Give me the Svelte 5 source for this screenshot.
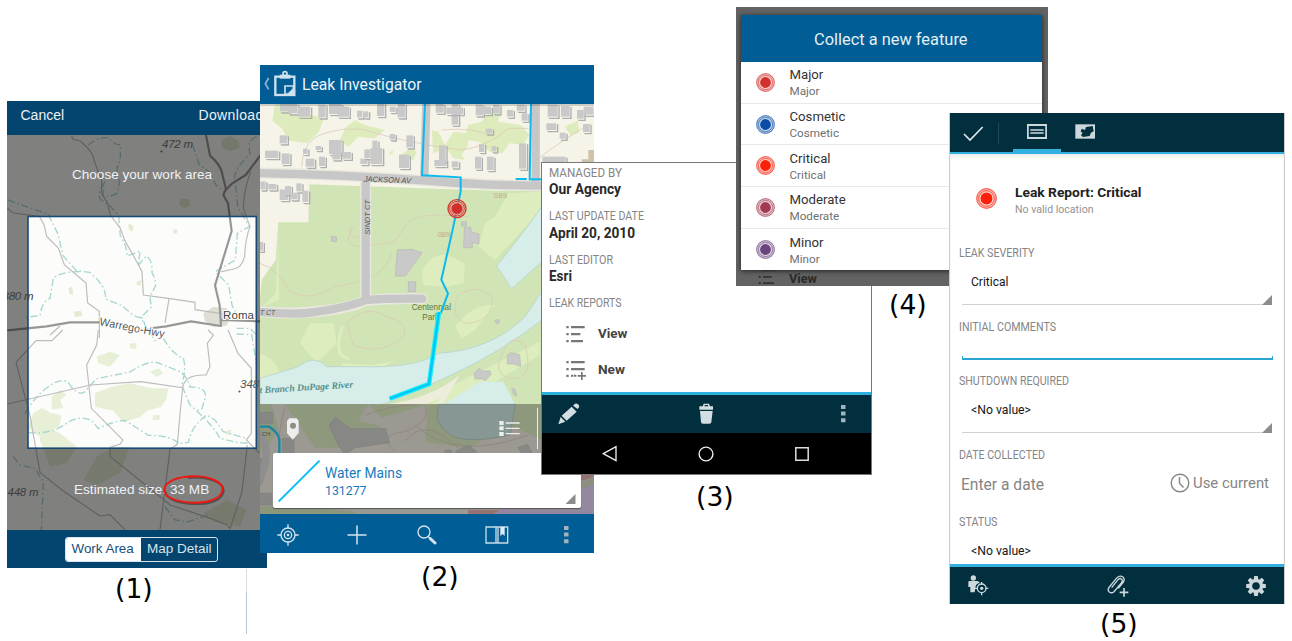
<script>
  const features = [
    { name: 'Major', color: '#d0312d' },
    { name: 'Cosmetic', color: '#0a4da8' },
    { name: 'Critical', color: '#fb2009' },
    { name: 'Moderate', color: '#a33a52' },
    { name: 'Minor', color: '#69447f' }
  ];
  const attributes = [
    ['MANAGED BY', 'Our Agency', 73, 72],
    ['LAST UPDATE DATE', 'April 20, 2010', 95, 86],
    ['LAST EDITOR', 'Esri', 64, 23]
  ];
  // Building footprints: x, y, width, height
  const houses = [
    [75,132,28,22],[100,132,28,28],[130,140,36,30],[190,134,22,38],[222,132,38,30],[248,140,34,30],[306,152,16,20],[324,154,16,18],
    [366,130,22,38],[404,140,18,16],[428,132,22,40],[542,132,24,26],[590,132,20,62],[574,142,50,20],[662,134,22,32],[684,140,24,22],
    [714,134,20,26],[756,150,18,20],[800,160,18,22],[785,134,24,18],[878,134,30,36],[918,138,26,32],[966,150,20,26],[986,140,28,24],
    [874,190,30,20],[984,192,20,24],[914,218,18,18],[74,226,22,24],[30,272,40,22],[80,280,24,32],[144,266,14,16],[152,296,26,24],
    [192,290,18,28],[222,240,38,42],[232,276,24,22],[262,276,26,20],[182,258,16,12],[316,296,22,16],[328,268,18,26],[352,242,16,30],
    [346,264,36,48],[404,222,16,16],[454,226,20,36],[432,284,30,40],[552,256,20,50],[538,300,36,18],[590,304,20,18],[672,252,16,24],
    [660,290,18,36],[696,290,20,40],[710,258,14,16],[792,250,22,76],[692,206,20,14],[862,290,70,16],[16,364,16,24],[40,372,24,16],
    [74,388,26,32],[90,378,18,24],[106,398,22,20],[124,370,16,24],[142,392,18,34],[10,546,14,26]
  ];
</script>

{#snippet rings(color, size)}
  <svg class="rings" width={size} height={size} viewBox="0 0 20 20">
    <circle cx="10" cy="10" r="9.9" fill={color} opacity=".32" />
    <circle cx="10" cy="10" r="9.3" fill="none" stroke={color} stroke-width=".9" opacity=".7" />
    <circle cx="10" cy="10" r="7.5" fill="none" stroke={color} stroke-width=".8" opacity=".7" />
    <circle cx="10" cy="10" r="6.3" fill="#fff" opacity=".65" />
    <circle cx="10" cy="10" r="5.7" fill={color} />
  </svg>
{/snippet}

{#snippet fit(text, width, size, weight = 400)}
  <svg class="fit" width={width + 2} height="20"><text x="0" y="14" textLength={width} lengthAdjust="spacingAndGlyphs" font-size={size} font-weight={weight}>{text}</text></svg>
{/snippet}

{#snippet dots()}
  <svg width="5" height="18" viewBox="0 0 5 18" fill="#9fb4be"><path d="M0 0h4.500v4H0zM0 6.600h4.500v4H0zM0 13.200h4.500v4H0z" /></svg>
{/snippet}

<main>
  <section class="phone area">
    <header><span>Cancel</span><span>Download</span></header>
    <div class="stack">
      <svg class="map" width="260" height="395" viewBox="7 135 260 395">
        <rect x="7" y="135" width="260" height="395" fill="#fcfcfa" />
        <g transform="translate(0 95) scale(.33333)">
          <g fill="#e2ecd0">
            <path d="M665 135l25-12 25 15 5 20-30 10-25-10zM540 312l25 0 8 18-20 10-16-10zM385 385l15 8-2 18-12-8zM520 402l12 2-2 12-10-2zM222 650l20-3 5 15-22 5zM205 580l12-5 2 25-10-2zM410 560l14-4-2 16-12-2z" />
            <path d="M610 655l30-20 40 5 12 22-12 30-38 5-28-20z" fill="#deded4" />
          </g>
          <g fill="none" stroke="#a8d6d1" stroke-width="4" stroke-dasharray="22 8 5 8">
            <path d="M265 150q30-25 60-22q20 25 35 20q5 60-10 70l8 45-5 30q-20 15-45 10l5-40q-22 30-12 50l30 20 25 30 5 60q20 30 20 60l40-15-8 45 25-30q20 10 18 50q16 30 8 45l-14 28 4 30-30 30q15 20 8 40l20 10 15 25" />
            <path d="M24 315l60 22 60 20 30 60 15 65 40 45 40 5q50 40 48 80l50 20q40 40 55 35l20 35 40-5" />
            <path d="M240 530q-60 0-80 20l-10 60q-25 10-30 52l-45 5" />
            <path d="M578 150l20 60 30 20 20 40 20 15M770 125q-30 10-20 50l-35 40q-20 40-8 60l6 60 35 60-36 20-6 80-60 35 40 40 10 60 10 20M710 700l40 0 20 20" />
          </g>
          <g fill="none" stroke="#bebcbc" stroke-width="3.500">
            <path d="M215 123l4 10 22 5q40 35 40 55q10 30 24 60l0 42 18 30 8 35 30 40 15 40q35 60 50 90l4 70 75 10 80 12 0 22 80 12" />
            <path d="M22 340l18 14 78 10 14 25 8 35 35 35 18 50 65 55 5 60 35 25 0 80" />
            <path d="M507 612l-12 72M752 230q-22 60-22 110l20 55q-15 40-16 90-10 35-32 37l-38 8M180 693l-30 27" />
          </g>
          <path d="M618 120l12 62q35 30 38 60l10 40-8 18 14 25 11 83-50 163 14 60 4 62-90-14-75 15-40 5M300 682l-90 0-70 12-118 12M665 675l115 4M672 290l25-25 40-25 45-60" fill="none" stroke="#979797" stroke-width="6.500" stroke-linejoin="round" />
        </g>
        <g transform="translate(0 330) scale(.33333)">
          <g fill="#e7f0d6">
            <path d="M285 190l50-20 55-10 65 15 50 0-5 30-15 25-45 12-20 20-50 15-30-35-55-12z" />
            <path d="M155 200l25-20 20 14-20 15 10 25-35 5zM100 250l25-16 30 16 30 5-8 35-40 20 25 20-40-8-40-30zM290 80l40-15 30 10-30 35-35-10zM450 125l25-10 15 14-20 12zM120 280l60 30 50 40-30 50-50 10-30-80zM390 40l20 0-2 16-18 0zM340 350l50 0-30 80-70 35-40-15 40-70zM460 255l22 0-5 15-20 0zM680 300l14 0 0 15-15 0zM610 550l70-40 60 30-20 50-80-15z" />
          </g>
          <g fill="none" stroke="#a8d6d1" stroke-width="4" stroke-dasharray="22 8 5 8">
            <path d="M75 250q30-50 60-72q60-50 80-5q30 30 45 5l30-32 100-20q60-40 90-25l50 20q30 10 40 50q50 0 46 30l-10 35-20 8M490 25q30 50 60 60q10 30-5 80l25 60q70 60 90 100l50 12 35 3" />
            <path d="M85 308q70 5 110-25q40-30 80-12l20 25q50-25 80-25l70 45q70 0 90 25l30-4q10-50 55-82l25 15 25 35 70 20" />
            <path d="M40 380l20 25 45 10 25 40-6 145M495 530l30 40 40 5 60-20M710 12l45 2 15 90" />
          </g>
          <g fill="none" stroke="#bebcbc" stroke-width="3.500">
            <path d="M22 222l250-57 150-10 126 18-8 80-8 90-22 15-30 240M295 0l-5 45-30 60 14 130 95 95-8 12-32 10 2 28 180 145 120 40 50 20 10 12M188 0l-32 32-48 0-60 65 42 160 30 170 70 56 110 75 30-4 50 50-5 12M548 173q5-40 70-38l12-25-8-70 18-25-16-15M684 0l30 70 40 45 0 195-15 20 40 40M742 345l-16 140-36 112" />
          </g>
        </g>
        <path d="M7 135h260v395H7zM28 216.500v231.500h228v-231.500z" fill="#000" fill-opacity=".49" fill-rule="evenodd" />
        <rect x="28" y="216.500" width="228.300" height="231.700" fill="none" stroke="#164b78" stroke-width="1.600" />
        <g font-family="Liberation Sans, sans-serif" font-size="11.500" fill="#555">
          <text x="162" y="147.500" font-style="italic" fill="#3d3d3d" textLength="31">472 m</text>
          <text x="2.500" y="299.500" font-style="italic" fill="#3d3d3d" textLength="31">380 m</text>
          <text x="7.500" y="495.500" font-style="italic" fill="#3d3d3d" textLength="31">448 m</text>
          <text x="240" y="388" font-style="italic">348</text>
          <text x="223" y="318.500" fill="#3f3f3f" textLength="31" stroke="#fff" stroke-width="2" paint-order="stroke">Roma</text>
          <text transform="translate(99 325) rotate(11)" font-size="11" textLength="66" stroke="#fff" stroke-width="2" paint-order="stroke">Warrego-Hwy</text>
        </g>
        <circle cx="161.500" cy="151.500" r="1" fill="#333" /><circle cx="239.500" cy="391.500" r="1" fill="#555" />
      </svg>
      <div class="hints">
        <p>Choose your work area</p>
        <p>Estimated size: <span class="size">33 MB<svg class="ring" width="64" height="32" viewBox="162 474 64 32" fill="none">
          <path d="M188 476.500c20-2 36 5 35.500 13-.5 9-14 13.500-29 13.200-16-.3-29-5-29.300-12.700" stroke="#222" stroke-opacity=".5" stroke-width="2" transform="translate(1.200 1.400)" />
          <path d="M188 476.500c20-2 36 5 35.500 13-.5 9-14 13.500-29 13.200-16-.3-29-5-29.300-12.700C165 482 178 476 196 476.600" stroke="#ef1712" stroke-width="1.900" /></svg></span></p>
      </div>
    </div>
    <footer><div class="segments"><b>Work Area</b><span>Map Detail</span></div></footer>
  </section>
  <i class="rule"></i>

  <section class="phone viewer">
    <header>
      <svg width="35" height="27" viewBox="24 30 105 81" fill="none" stroke="#cfe1ee">
        <path d="M41 54L31 71l10 17" stroke-width="5" stroke="#8db9d5" />
        <rect x="61" y="50" width="57" height="55" stroke-width="7" /><path d="M74 44h32v12H74z" fill="#cfe1ee" stroke="none" /><circle cx="90" cy="41" r="6" stroke-width="5" />
        <path d="M90 104V78h28" stroke-width="5" /><path d="M90 104l28-27v27z" fill="#cfe1ee" stroke="none" /><path d="M97 101v-16h17z" fill="#015d95" stroke="none" />
      </svg>
      {@render fit('Leak Investigator', 119.5, 16.4)}
    </header>
    <div class="stack">
      <svg class="map" width="334" height="410" viewBox="260 104 334 410">
        <g transform="translate(255 60) scale(.33333)">
          <rect width="1035" height="1400" fill="#f6f4e8" />
          <g fill="#deecbd">
            <path d="M60 132l-8 50 30 25 20 35 55 8 35-35 15-40-40-10-60 0-30-35zM270 205l30-25 30 15 60 15-30 25-50-5-30 30-25-20zM530 210l20 5 20 40 25-40 40 5 5 35-20 30 10 15-35-5-20-30-40 15zM640 195l40-10 20-30 25-20 15 15-12 35 70 10 25 30-20 30-40-5-20 30-40-5-30-30-45-5zM400 280l15-10-3 14zM928 200l40-18 5 35-25 10zM430 290l35-25 20 10-10 25z" />
          </g>
          <path d="M163 373L720 392 860 388V1420H0V870L20 660 62 600 70 487 160 487z" fill="#d0e4b5" />
          <g fill="#ddedbd">
            <path d="M860 395L760 400 720 470 690 490 670 560 720 600 840 470 860 450zM500 640q20-60 80-55l50 25-5 60-50 10-70-5zM165 790l70 0 10 60-60 60-50-60zM15 880q50 20 60 60l-60 15zM600 800q50-70 120-65l-60 75-40 25zM15 1060q100-10 200 5l300-50 200-100 140-70 0 40-250 150-150 70-240 10zM70 520l-8 180-40 40 50-20zM260 910l90 5 60-10-20 15-130 5z" />
            <path d="M262 800q-30 90 20 96" fill="none" stroke="#ddedbd" stroke-width="9" />
          </g>
          <path d="M860 440q-40 60-135 178l45 68 90-80zM15 955l115-35q50-40 85 0l100 0q170 5 235-40q160-10 260-110l50-75V780q-80 65-200 130-200 100-300 130-150 10-345-5z" fill="#d6edea" stroke="#bdd8cc" stroke-width="3" />
          <g fill="none" stroke="#dccbb6" stroke-width="2.500">
            <path d="M140 320q5-85 70-100 60-20 120-10 130 40 290 60 80-10 140-65l60 0M560 210q100-10 150 20M15 610q60 20 85 80 60 40 140-10 150-20 170-100M300 495q-60 80 60 60l60-10 40-60q40-30 180-15M290 500q-20 40 30 30M275 790q60-60 120-20 70 20 50 60-70 60-150 25zM610 700q-30 80 30 90 80-10 70-80-40-40-90-10M755 855q20-30 55 0 30 100-40 100-70-10-15-100M830 310q120-90 180-120" />
          </g>
          <g fill="none" stroke-linejoin="round">
            <path d="M0 339q240 4 500 22 200 16 360 16M332 370v350l-30 14q-130 36-290 20M332 722q60-7 170-6" stroke="#e9e8df" stroke-width="33" stroke-linecap="round" />
            <path d="M514 130L508 350M842 130v240M0 339q240 4 500 22 200 16 360 16M332 370v350q-60 25-175 39-60 5-150-4M332 720q60-5 170-4" stroke="#c7c7c7" stroke-width="25" stroke-linecap="round" />
          </g>
          {#each houses as [x, y, bw, bh]}
            <path d="M{x + 2} {y + bh + 3}h{bw}V{y + 3}l4 0v{bh + 4}h-{bw}z" fill="#aeaeae" />
            <rect {x} {y} width={bw} height={bh} fill="#c9c9c9" />
          {/each}
          <g fill="#c9c9c9" stroke="#b6b6b4" stroke-width="2">
            <path d="M427 570l44-2 30 10-50 70-30 0zM460 665h22v30h-22zM620 485h14v13h-14zM628 502h20v14l24 6v30l-20-5v16h-26zM230 528l16 4-3 14-14-3zM757 885l12-7 25 6 3 35-20-7-20 0zM658 940l14-15 10 8 24 0 2 10-18 20-6-6-24 0zM770 985l10 3 5 20-10-5zM720 782l10-4 5 8-10 5z" />
            <path d="M1000 270h20v40h-40v-12h20z" fill="#cec3a8" stroke="none" />
          </g>
          <path d="M380 1035q140-15 235-90l-30 50-40 70-20 0 30-50q-90 40-150 40z" fill="#eeecdb" />
          <path d="M555 1040l120-75 70 0 30 60 30 80-90 50-100-40z" fill="#d6edea" />
          <g font-family="Liberation Sans, sans-serif">
            <text x="326" y="365" font-size="24" font-style="italic" fill="#555" textLength="142" lengthAdjust="spacingAndGlyphs" transform="rotate(2 326 365)">JACKSON AV</text>
            <text transform="translate(344 524) rotate(-90)" font-size="24" font-style="italic" fill="#555" textLength="104" lengthAdjust="spacingAndGlyphs">SINDT CT</text>
            <text x="15" y="764" font-size="23" font-style="italic" fill="#555" textLength="46" lengthAdjust="spacingAndGlyphs">T CT</text>
            <text x="716" y="414" font-size="23" fill="#c8a78b" textLength="40">089</text>
            <text x="548" y="531" font-size="23" fill="#c8a78b" textLength="38">089</text>
            <text x="470" y="750" font-size="26" fill="#5f7938" textLength="118" lengthAdjust="spacingAndGlyphs">Centennial</text>
            <text x="502" y="779" font-size="26" fill="#5f7938" textLength="50" lengthAdjust="spacingAndGlyphs">Park</text>
            <text transform="translate(14 1000) rotate(-3.500)" font-family="Liberation Serif, serif" font-weight="700" font-style="italic" font-size="29" fill="#59918d" textLength="281" lengthAdjust="spacingAndGlyphs">t Branch DuPage River</text>
          </g>
          <g fill="none" stroke="#0bb9f1">
            <path d="M510 132L501 346l116 6 0 42-24 115-34 150 20 42-22 60M828 132L824 358h36M782 357h33" stroke-width="6" />
            <path d="M552 756L522 972 404 1016" stroke="#18eefb" stroke-width="14" /><path d="M552 756L522 972 404 1016" stroke-width="7" stroke="#00c8f4" />
          </g>
          <g fill="none" stroke="#d23934"><circle cx="606" cy="446" r="27" stroke-width="4" /><circle cx="606" cy="446" r="22" stroke-width="3" fill="#e4aa95" fill-opacity=".7" /><circle cx="606" cy="446" r="17" fill="#d12d2b" stroke="#e78077" stroke-width="2" /></g>
        </g>
        <g transform="translate(255 395) scale(.33333)">
          <path d="M0 28H860V360H0z" fill="#dedbce" />
          <path d="M90 28l250 0-30 50 70 15-70 65-130 0zM0 28h50l20 75-40 65-30 0zM340 28h180l-140 40zM520 28h350v110L760 90 640 160l-130-20z" fill="#c7d9aa" />
          <path d="M550 28l-4 45q30 60 90 60 60 5 130-15l15-90z" fill="#bdd7d0" stroke="#a3beb5" stroke-width="3" />
          <path d="M0 340q60-20 200 0l100 10v15H0z" fill="#c5d5a8" />
          <g fill="none" stroke="#cbb8a8" stroke-width="2.500"><path d="M90 30l-20 100 50 30M420 170q-60-50 30-60 80-30 60-80M450 140q60-80 160 20M480 90q120 110 340 30M330 60q80-30 150-30" /></g>
          <g fill="#bdbdb9" stroke="#b0b0ac" stroke-width="2"><path d="M222 90l20-24 45 35 105 0 12 42-105 15-28 24-20-30zM15 52h38v34H15zM82 130h35v50H82zM0 190h30v35H0zM0 295h50v35H0zM600 170l40-20 25 20v20zM570 165l20 0 0 10-20 0zM788 158l30-10 15 30-30 0z" /></g>
          <path d="M0 110q45 30 30 100l-20 60" fill="none" stroke="#c9c9c9" stroke-width="22" />
          <text x="20" y="122" font-family="Liberation Sans, sans-serif" font-size="18" font-style="italic" fill="#555">CH</text>
          <path d="M15 95h28q30 20 30 40v40" fill="none" stroke="#0bb9f1" stroke-width="7" />
          <path d="M680 357L980 285 1020 245V357z" fill="#d3bfe3" /><path d="M640 345l95 0-20 12h-75zM970 225h50v20l-45 15z" fill="#d89a9b" /><path d="M970 265l50-23v22l-50 24z" fill="#c6c9b1" />
        </g>
        <rect x="260" y="404" width="334" height="110" fill="#383838" fill-opacity=".4" />
        <path d="M260 104h334v2H260z" opacity=".16" />
      </svg>
      <div class="mapui">
        <div class="tools">
          <svg width="12" height="22" viewBox="96 67 36 66"><path d="M103 68h22l6 8v36l-18 20-17-20V76z" fill="#eee" /><circle cx="114" cy="90" r="9" fill="#8d8f82" /></svg>
          <svg width="39" height="43" viewBox="732 36 117 129" fill="#ededeb"><path d="M733 78h13v12h-13zM733 94h13v12h-13zM733 111h13v12h-13zM752 82h42v4h-42zM752 98h42v4h-42zM752 114h42v4h-42zM846 38h3v125h-3z" /></svg>
        </div>
        <div class="card">
          <svg width="42" height="42"><path d="M.7 41.500L41.500 .7" stroke="#0bbcf8" stroke-width="1.900" /></svg>
          <div class="names">{@render fit('Water Mains', 77, 14.3)}{@render fit('131277', 41.5, 12.8)}</div>
          <i class="tri"></i>
        </div>
      </div>
    </div>
    <footer>
      <svg width="22" height="22" viewBox="65 386 66 66" fill="none" stroke="#d4e4ef" stroke-width="4"><circle cx="98" cy="419" r="21" /><circle cx="98" cy="419" r="11" /><circle cx="98" cy="419" r="4" fill="#d4e4ef" stroke="none" /><path d="M98 387v12M98 439v12M66 419h12M118 419h12" /></svg>
      <svg width="20" height="20" viewBox="0 0 20 20" stroke="#d4e4ef" stroke-width="1.500"><path d="M.5 10h19M10 .5v19" /></svg>
      <svg width="20" height="20" viewBox="486 389 60 60" fill="none" stroke="#d4e4ef"><circle cx="507" cy="410" r="18" stroke-width="4" /><path d="M519 423l7 7" stroke-width="4" /><path d="M526 430l14 13" stroke-width="9" stroke-linecap="round" /></svg>
      <svg width="24" height="18" viewBox="689 392 72 54" fill="none" stroke="#c7dbe9" stroke-width="4"><path d="M692 395h65v48h-65zM722 395v48M728 395v48" /><path d="M735 395h13v27l-6-6-7 6z" fill="#e1edf4" stroke="none" /></svg>
      {@render dots()}
    </footer>
  </section>

  <section class="phone detail">
    <div class="sheet">
      {#each attributes as [label, value, lw, vw]}
        <div class="pair"><span class="label">{@render fit(label, lw, 12.6)}</span><b>{@render fit(value, vw, 13.8, 700)}</b></div>
      {/each}
      <span class="label">{@render fit('LEAK REPORTS', 72.5, 12.6)}</span>
      <div class="links">
        <div class="link"><svg width="20" height="20" viewBox="94 5 60 60" fill="#777"><path d="M95 11h7v7h-7zM95 32h7v7h-7zM95 53h7v7h-7zM109 11h41v7h-41zM109 32h28v7h-28zM109 53h36v7h-36z" /></svg>{@render fit('View', 29.5, 13.6, 700)}</div>
        <div class="link"><svg width="20" height="20" viewBox="94 114 60 60" fill="#777"><path d="M95 117h7v7h-7zM95 138h7v7h-7zM95 158h7v7h-7zM109 117h41v7h-41zM109 138h41v7h-41zM109 158h7v6h-7zM118 158h7v6h-7zM129 159h26v5h-26zM139 150h5v24h-5z" /></svg>{@render fit('New', 27, 13.6, 700)}</div>
      </div>
    </div>
    <div class="bar">
      <svg width="22" height="22" viewBox="68 245 66 66" fill="#d3dee2"><path d="M69 309l7-22 14 14zM79 283l30-27 15 15-30 27zM113 253l6-6q10-2 13 9l-5 7z" /></svg>
      <svg width="14" height="21" viewBox="491 246 42 63" fill="#d3dee2"><path d="M492 256h10l3-8h16l3 8h9v10h-41zM507 256h12l-2-4h-8zM494 270h38l-4 34q0 4-6 4h-19q-6 0-6-4z" fill-rule="evenodd" /></svg>
      {@render dots()}
    </div>
    <div class="nav">
      <svg width="16" height="17" viewBox="201 376 48 51" fill="none" stroke="#eee" stroke-width="4"><path d="M205 402l38-21v42z" /></svg>
      <svg width="16" height="16" viewBox="0 0 16 16" fill="none" stroke="#eee" stroke-width="1.400"><circle cx="8" cy="8" r="6.900" /></svg>
      <svg width="14" height="14" viewBox="0 0 14 14" fill="none" stroke="#ddd" stroke-width="1.500"><path d="M.8.800h12.400v12.400H.8z" /></svg>
    </div>
  </section>

  <section class="phone picker">
    <div class="dialog">
      <header>{@render fit('Collect a new feature', 153.5, 16.4)}</header>
      {#each features as f}
        <div class="row">{@render rings(f.color, 19)}<div><span>{f.name}</span><small>{f.name}</small></div></div>
      {/each}
    </div>
    <div class="under"><svg width="17" height="14" viewBox="84 332 51 42" fill="#333"><path d="M95 332h40v4h-40zM86 349h6v6h-6zM86 368h6v6h-6zM99 350h26v5h-26zM99 369h33v5h-33z" /></svg>{@render fit('View', 28, 13.2, 700)}</div>
  </section>

  <section class="phone report">
    <header>
      <svg width="22" height="16" viewBox="68 64 66 48" fill="none" stroke="#dfe7e9" stroke-width="5"><path d="M71 88l18 18 38-39" /></svg>
      <i class="sep"></i>
      <span class="tab on"><svg width="20" height="15" viewBox="260 55 60 45" fill="none" stroke="#cdd8dc"><path d="M262.500 58h55v39h-55z" stroke-width="5.500" /><path d="M270 73h40M270 82h40" stroke-width="4.500" /></svg></span>
      <span class="tab"><svg width="20" height="15" viewBox="404 58 60 45"><path d="M405 59h59v43h-59z" fill="#cdd8dc" /><path d="M437 67l20-3 3 16-8 4-4 10-20 3-6-5 5-8-6-3 3-9 10 4z" fill="#022f3e" /></svg></span>
    </header>
    <div class="form">
      <div class="record">{@render rings('#fb2009', 21)}<div><b>{@render fit('Leak Report: Critical', 126.5, 13.7, 700)}</b><small>{@render fit('No valid location', 78.5, 10.8)}</small></div></div>
      <div class="field tall"><span class="label">{@render fit('LEAK SEVERITY', 75.5, 12.6)}</span><div class="select">{@render fit('Critical', 37.5, 12.8)}<i class="tri"></i></div></div>
      <div class="field"><span class="label">{@render fit('INITIAL COMMENTS', 97, 12.6)}</span><div class="input"></div></div>
      <div class="field tall"><span class="label">{@render fit('SHUTDOWN REQUIRED', 110, 12.6)}</span><div class="select">{@render fit('<No value>', 60, 12.8)}<i class="tri"></i></div></div>
      <div class="field date"><span class="label">{@render fit('DATE COLLECTED', 86, 12.6)}</span>
        <div class="when"><span>{@render fit('Enter a date', 83, 16)}</span><span class="now"><svg width="20" height="20" viewBox="0 0 20 20" fill="none" stroke="#858585" stroke-width="1.400"><circle cx="10" cy="10" r="8.800" /><path d="M9.500 4v6.300l4 4.200" /></svg>{@render fit('Use current', 76, 15.3)}</span></div>
      </div>
      <div class="field"><span class="label">{@render fit('STATUS', 38.5, 12.6)}</span><div class="select last">{@render fit('<No value>', 60, 12.8)}</div></div>
    </div>
    <footer>
      <svg width="21" height="21" viewBox="84 377 63 63" fill="#cdd8dc"><circle cx="100" cy="386" r="8" /><path d="M85 398q0-3 4-3h24l7 5q-14 3-14 16l-2 13H91v-16h-6z" /><circle cx="125" cy="417" r="13" fill="none" stroke="#022f3e" stroke-width="8" /><g fill="none" stroke="#cdd8dc" stroke-width="4"><circle cx="125" cy="417" r="13" /><path d="M125 398v8M125 428v10M105 417h9M136 417h9" /></g><circle cx="125" cy="417" r="5" /></svg>
      <svg width="22" height="22" viewBox="499 373 66 66" fill="none" stroke="#cdd8dc" stroke-width="4"><path d="M513 411l19-24q6-6 11-1 4 4-1 11l-22 26q-7 6-14 1-7-6 0-15l23-28q9-8 18-2 7 7 0 17l-14 17" /><path d="M537 425h26M550 412v26" stroke-width="5" /></svg>
      <svg width="20" height="20" viewBox="-10 -10 20 20" fill="#cdd8dc">{#each [0, 45, 90, 135] as a}<path d="M-1.800-9.900h3.600l.6 4V5.900l-.6 4h-3.600l-.6-4V-5.900z" transform="rotate({a})" />{/each}<circle r="7" /><circle r="3.800" fill="#022f3e" /></svg>
    </footer>
  </section>

  <span class="caption" style="left:115px;top:573px">(1)</span>
  <span class="caption" style="left:421px;top:561px">(2)</span>
  <span class="caption" style="left:696px;top:481px">(3)</span>
  <span class="caption" style="left:889px;top:289px">(4)</span>
  <span class="caption" style="left:1100px;top:608px">(5)</span>
</main>

<style>
  :global(body) { background: #fff; }
  main { position: relative; width: 1292px; height: 641px; overflow: hidden; font-family: Roboto, sans-serif; }
  main *, main { box-sizing: border-box; }
  svg { display: block; flex: none; }
  .fit { overflow: visible; fill: currentColor; }
  p { margin: 0; }
  .phone { position: absolute; display: flex; flex-direction: column; overflow: hidden; }
  .stack { display: grid; }
  .stack > :global(*) { grid-area: 1 / 1; }
  .caption { position: absolute; font: 26.600px/31px "DejaVu Sans", sans-serif; color: #000; }
  .rule { position: absolute; left: 246px; top: 569px; width: 1px; height: 65px; background: linear-gradient(#ddd 23px, #b4c8da 23px); }
  .label { color: #858585; display: block; height: 20px; }

  .area { left: 7px; top: 101px; width: 260px; height: 467px; font-family: "Liberation Sans", sans-serif; font-size: 14px; color: #eef2f5; }
  .area header { height: 34px; background: #03456f; display: flex; justify-content: space-between; padding: 6px 0 0 13.500px; line-height: 17px; white-space: nowrap; }
  .area header span:last-child { width: 68.500px; letter-spacing: .35px; }
  .hints { padding: 31px 0 0 9px; line-height: 18px; }
  .hints p + p { margin-top: 297px; padding-left: 1px; margin-left: 57px; white-space: nowrap; font-size: 13.600px; }
  .hints p:first-child { padding-left: 56px; font-size: 13.550px; }
  .size { position: relative; }
  .ring { position: absolute; left: -8.500px; top: -8px; }
  .area footer { height: 38px; background: #03456f; padding: 6.500px 0 0 58px; }
  .segments { width: 153px; height: 25px; border: 1px solid #dbe5ed; border-radius: 3px; display: flex; line-height: 22px; overflow: hidden; }
  .segments b { font-weight: 400; background: #fff; color: #15507d; width: 75px; padding-left: 5.500px; font-size: 13.400px; white-space: nowrap; }
  .segments span { padding-left: 6px; font-size: 13.500px; color: #d9e3ea; white-space: nowrap; }

  .viewer { left: 260px; top: 65px; width: 334px; height: 488px; color: #edf4f9; }
  .viewer header { height: 39px; background: #015d95; display: flex; padding: 5px 0 0 3px; gap: 4.300px; }
  .viewer header .fit { margin-top: 5.700px; }
  .mapui { padding: 303px 13.500px 6px 13px; display: flex; flex-direction: column; }
  .tools { height: 46px; display: flex; justify-content: space-between; padding: 0 42.500px 0 14px; }
  .tools svg:first-child { margin-top: 11px; }
  .card { height: 55px; background: #fff; border-radius: 2px; box-shadow: 0 1px 1px #555; display: flex; color: #187bbd; padding: 7px 5px 0 5px; gap: 5px; }
  .names { display: grid; grid-template-rows: 17px 20px; flex: 1; padding-top: 4.300px; }
  .tri { width: 10px; height: 10px; background: #8c8c8c; clip-path: polygon(100% 0, 100% 100%, 0 100%); }
  .card .tri { margin-top: 34px; }
  .viewer footer { height: 39px; background: #015d95; display: flex; align-items: center; padding: 2px 0 0 17px; }
  .viewer footer svg:nth-child(2) { margin-left: 48px; }
  .viewer footer svg:nth-child(3) { margin-left: 50px; }
  .viewer footer svg:nth-child(4) { margin-left: 48px; }
  .viewer footer > :global(svg:nth-child(5)) { margin-left: 54.500px; }

  .detail { left: 541px; top: 162px; width: 331px; height: 313px; border: 1.500px solid #777; background: #fff; color: #292929; }
  .sheet { height: 229px; padding-left: 7px; }
  .pair { height: 43.300px; display: grid; grid-template-rows: 17.300px 20px; }
  .links { padding-top: 3.300px; }
  .link { height: 36px; padding: 0 0 0 16.500px; display: flex; align-items: center; gap: 12.500px; color: #444; }
  .link .fit { margin-bottom: 1px; }
  .bar { height: 41px; border-top: 3px solid #2cb0de; background: #022f3e; display: flex; align-items: center; padding: 0 0 1px 16px; }
  .bar svg:nth-child(2) { margin-left: 119px; }
  .bar > :global(svg:nth-child(3)) { margin-left: 128px; }
  .nav { flex: 1; background: #000; display: flex; align-items: center; justify-content: space-between; padding: 0 62px 0 60px; }
  .nav svg:nth-child(2) { margin-right: 1px; }

  .picker { left: 735.500px; top: 7px; width: 312px; height: 279px; background: #636363; padding: 7.500px 6px 0 5px; }
  .dialog { background: #fff; height: 255.500px; box-shadow: 0 1px 5px #222; flex: none; }
  .dialog header { height: 47.500px; background: #015d95; color: #e4eff6; display: flex; justify-content: center; padding: 16.500px 0 0 1px; }
  .row { height: 41.700px; border-bottom: 1px solid #e9e9e9; display: flex; align-items: center; padding-left: 15.300px; gap: 14.700px; }
  .row:last-child { border: 0; }
  .row div { display: flex; flex-direction: column; color: #333; font-size: 13.200px; line-height: 17px; padding-top: 1px; }
  .row small { font-size: 11.700px; line-height: 16px; color: #707070; }
  .under { display: flex; padding: 0 0 0 17px; gap: 14.500px; color: #292929; }
  .under .fit { margin-top: -1px; }

  .report { left: 949px; top: 113px; width: 336px; height: 491px; border: solid #ccc; border-width: 0 1px; background: #fff; }
  .report header { height: 41px; background: #022f3e; border-bottom: 2.500px solid #32b1e1; display: flex; align-items: flex-start; }
  .report header > svg { margin: 13px 14px 0 12.500px; }
  .sep { width: 1px; height: 21px; background: #1f4a58; margin: 10px 13.500px 0 -.5px; }
  .tab { width: 48px; height: 38.500px; display: flex; justify-content: center; padding-top: 11px; }
  .on { border-bottom: 3px solid #32b1e1; padding-top: 10.500px; }
  .form { height: 410px; overflow: hidden; padding: 29.300px 11px 0 9.300px; box-shadow: inset 0 3px 3px #eee; }
  .record { height: 59.700px; display: flex; gap: 17.300px; padding-left: 17px; color: #222; }
  .record .rings { margin-top: 4.700px; }
  .record b, .record small { display: block; height: 16px; }
  .record small { color: #929292; }
  .field { height: 54px; }
  .tall { height: 74px; }
  .date { height: 67px; }
  .select { margin: 0 1px 0 2.700px; height: 42.500px; border-bottom: 1px solid #d2d2d2; padding: 9px 0 0 9px; display: flex; justify-content: space-between; color: #161616; }
  .select .tri { margin-top: 23px; }
  .last { border: 0; }
  .input { margin: 19px .5px 0 2.700px; height: 4px; border: solid #2ba6d3; border-width: 0 1px 2px; }
  .when { display: flex; justify-content: space-between; padding: 11px 2px 0 1.500px; color: #858585; }
  .now { display: flex; gap: 3.500px; margin-top: -1.500px; }
  .now svg:first-child { margin-top: -1px; }
  .report footer { height: 40px; border-top: 3px solid #32b1e1; background: #022f3e; display: flex; align-items: center; justify-content: space-between; padding: 0 18px; }
</style>
